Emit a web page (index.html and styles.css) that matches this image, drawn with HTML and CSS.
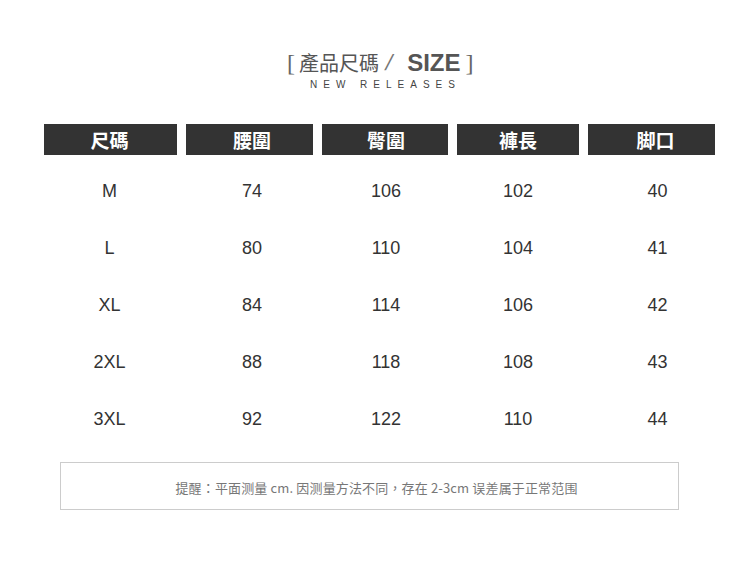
FILE: index.html
```html
<!DOCTYPE html>
<html lang="zh-Hant">
<head>
<meta charset="utf-8">
<link rel="stylesheet" href="styles.css">
</head>
<body>
<div class="page">
  <header class="title">
    <div class="title-main">
      <span class="bracket">[</span>
      <span class="cn">產品尺碼</span>
      <span class="slash">/</span>
      <span class="en">SIZE</span>
      <span class="bracket">]</span>
    </div>
    <div class="sub">NEW RELEASES</div>
  </header>

  <div class="table">
    <div class="th">尺碼</div>
    <div class="th">腰圍</div>
    <div class="th">臀圍</div>
    <div class="th">褲長</div>
    <div class="th">脚口</div>

    <div class="td">M</div><div class="td">74</div><div class="td">106</div><div class="td">102</div><div class="td">40</div>
    <div class="td">L</div><div class="td">80</div><div class="td">110</div><div class="td">104</div><div class="td">41</div>
    <div class="td">XL</div><div class="td">84</div><div class="td">114</div><div class="td">106</div><div class="td">42</div>
    <div class="td">2XL</div><div class="td">88</div><div class="td">118</div><div class="td">108</div><div class="td">43</div>
    <div class="td">3XL</div><div class="td">92</div><div class="td">122</div><div class="td">110</div><div class="td">44</div>
  </div>

  <div class="note">提醒：平面测量 cm. 因测量方法不同，存在 2-3cm 误差属于正常范围</div>
</div>
</body>
</html>
```

FILE: styles.css
```css
html, body {
  margin: 0;
  padding: 0;
  background: #ffffff;
}

.page {
  width: 750px;
  height: 574px;
  padding-top: 50px;
  box-sizing: border-box;
  font-family: "Liberation Sans", Arial, sans-serif;
}

.title {
  display: flex;
  flex-direction: column;
  align-items: flex-start;
  padding-left: 287px;
}

.title-main {
  display: flex;
  align-items: center;
  height: 26px;
  color: #555555;
}

.bracket {
  font-family: "Liberation Serif", serif;
  font-size: 24px;
  line-height: 26px;
  color: #666666;
}

.cn {
  font-family: "Noto Sans CJK TC", sans-serif;
  font-size: 20px;
  line-height: 26px;
  margin-left: 4px;
  color: #555555;
}

.slash {
  font-family: "Liberation Sans", sans-serif;
  font-size: 22px;
  line-height: 26px;
  margin-left: 7px;
  color: #777777;
  display: inline-block;
  transform: skewX(-14deg);
}

.en {
  font-family: "Liberation Sans", sans-serif;
  font-weight: 700;
  font-size: 24px;
  line-height: 26px;
  margin-left: 15px;
  margin-right: 5px;
  color: #555555;
}

.sub {
  margin-top: 3px;
  margin-left: 23px;
  font-size: 10px;
  line-height: 12px;
  letter-spacing: 6px;
  color: #444444;
}

.table {
  display: grid;
  grid-template-columns: 133px 127px 126px 122px 127px;
  grid-template-rows: 39px;
  grid-auto-rows: 57px;
  column-gap: 9px;
  margin-top: 33px;
  margin-left: 44px;
}

.th {
  height: 31px;
  box-sizing: border-box;
  background: #333333;
  color: #ffffff;
  font-family: "Noto Sans CJK TC", sans-serif;
  font-weight: 700;
  font-size: 19px;
  line-height: 31px;
  text-align: center;
  align-self: start;
}

.td {
  font-size: 18px;
  line-height: 57px;
  color: #333333;
  text-align: center;
}

.table > div:nth-child(5n+1) {
  padding-right: 2px;
}

.table > div:nth-child(5n+2) {
  padding-left: 5px;
}

.table > div:nth-child(5n+3) {
  padding-left: 2px;
}

.table > div:nth-child(5n) {
  padding-left: 8px;
}

.table > .td:nth-child(5n) {
  padding-left: 12px;
}

.note {
  margin-top: 14px;
  margin-left: 60px;
  width: 619px;
  height: 48px;
  box-sizing: border-box;
  border: 1px solid #cccccc;
  display: flex;
  align-items: center;
  justify-content: center;
  font-family: "Noto Sans CJK SC", sans-serif;
  font-size: 13px;
  letter-spacing: 0.15px;
  color: #777777;
  padding-top: 2px;
  padding-left: 14px;
}
```
